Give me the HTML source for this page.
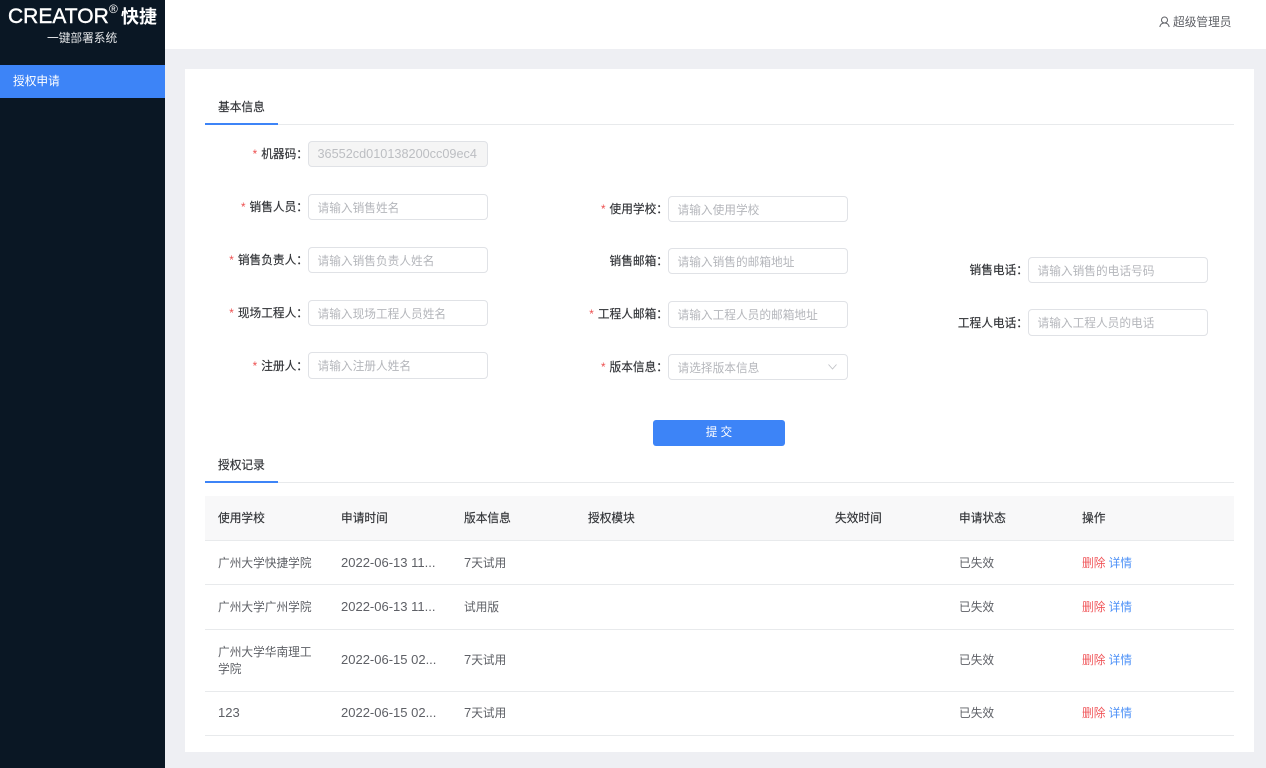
<!DOCTYPE html>
<html lang="zh"><head><meta charset="utf-8"><title>授权申请</title>
<style>
*{box-sizing:border-box;margin:0;padding:0}
html,body{width:1266px;height:768px;overflow:hidden;background:#eeeff3}
body{position:relative;font-family:"Liberation Sans","Noto Sans CJK SC",sans-serif;font-size:11.7px;color:#5e6066}
.a{position:absolute;white-space:nowrap;line-height:16px;margin-top:1px}
.s{margin-top:0}
.u{margin-top:0}
.i{position:absolute;width:180px;height:26px;border:1px solid #e0e2e6;border-radius:4px;background:#fff;color:#b4b6bb;line-height:27px;padding-left:8.5px;white-space:nowrap}
.l{position:absolute;width:140px;text-align:right;line-height:16px;color:#303236;white-space:nowrap;margin:1px 0 0 7px;-webkit-text-stroke:.15px #303236}
.l b{font-weight:400;color:#ed4f4f;margin-right:4px;-webkit-text-stroke:0}
.line{position:absolute;background:#e8eaec;height:1px;left:205px;width:1029px}
.tab{position:absolute;left:205px;width:73px;height:2px;background:#3d84f7}
.h{color:#303236;-webkit-text-stroke:.15px #303236}
.d{font-size:13px}
.r{color:#f0565a}
.bl{color:#4a8ff7}
</style></head><body>
<div style="position:absolute;left:0;top:0;width:165px;height:768px;background:#0a1724"></div>
<div class="a s" style="left:8px;top:5px;font-size:21px;line-height:24px;color:#fff;-webkit-text-stroke:.4px #fff">CREATOR</div>
<div class="a s" style="left:109px;top:3px;font-size:12px;line-height:12px;color:#fff">®</div>
<div class="a s" style="left:121px;top:5px;font-size:18px;line-height:24px;color:#fff;font-weight:700">快捷</div>
<div class="a s" style="left:47px;top:31px;font-size:11.7px;color:#e4e6e8">一键部署系统</div>
<div style="position:absolute;left:0;top:65px;width:165px;height:33px;background:#3d84f7"></div>
<div class="a s" style="left:13px;top:74px;color:#fff">授权申请</div>

<div style="position:absolute;left:165px;top:0;width:1101px;height:49px;background:#fff"></div>
<svg style="position:absolute;left:1159px;top:16px" width="11" height="12" viewBox="0 0 11 12" fill="none" stroke="#5e6066" stroke-width="1"><circle cx="5.5" cy="4" r="3"/><path d="M.8 11c.5-2.600 2.200-4 4.700-4s4.200 1.400 4.700 4"/></svg>
<div class="a" style="left:1173px;top:14px">超级管理员</div>

<div style="position:absolute;left:185px;top:69px;width:1069px;height:683px;background:#fff"></div>

<div class="a h" style="left:218px;top:99px">基本信息</div>
<div class="line" style="top:124px"></div><div class="tab" style="top:123px"></div>

<div class="l" style="left:161px;top:146px"><b>*</b>机器码：</div>
<div class="i" style="left:308px;top:141px;background:#f5f5f5;color:#bcbec2;font-size:12.7px;line-height:25px">36552cd010138200cc09ec4</div>
<div class="l" style="left:161px;top:199px"><b>*</b>销售人员：</div>
<div class="i" style="left:308px;top:194px">请输入销售姓名</div>
<div class="l" style="left:161px;top:252px"><b>*</b>销售负责人：</div>
<div class="i" style="left:308px;top:247px">请输入销售负责人姓名</div>
<div class="l" style="left:161px;top:305px"><b>*</b>现场工程人：</div>
<div class="i" style="left:308px;top:300px">请输入现场工程人员姓名</div>
<div class="l" style="left:161px;top:358px"><b>*</b>注册人：</div>
<div class="i" style="left:308px;top:352px;height:27px">请输入注册人姓名</div>

<div class="l" style="left:521px;top:201px"><b>*</b>使用学校：</div>
<div class="i" style="left:668px;top:196px">请输入使用学校</div>
<div class="l" style="left:521px;top:253px">销售邮箱：</div>
<div class="i" style="left:668px;top:248px">请输入销售的邮箱地址</div>
<div class="l" style="left:521px;top:306px"><b>*</b>工程人邮箱：</div>
<div class="i" style="left:668px;top:301px;height:27px">请输入工程人员的邮箱地址</div>
<div class="l" style="left:521px;top:359px"><b>*</b>版本信息：</div>
<div class="i" style="left:668px;top:354px">请选择版本信息</div>
<svg style="position:absolute;left:827px;top:363px" width="11" height="8" viewBox="0 0 11 8" fill="none" stroke="#c0c2c6" stroke-width=".9"><path d="M1.500 1.500l4 4.500 4-4.500"/></svg>

<div class="l" style="left:881px;top:262px">销售电话：</div>
<div class="i" style="left:1028px;top:257px">请输入销售的电话号码</div>
<div class="l" style="left:881px;top:315px">工程人电话：</div>
<div class="i" style="left:1028px;top:309px;height:27px">请输入工程人员的电话</div>

<div style="position:absolute;left:653px;top:420px;width:132px;height:26px;background:#3d84f7;border-radius:3px;color:#fff;text-align:center;line-height:26px;letter-spacing:3px;padding-left:3px">提交</div>

<div class="a h" style="left:218px;top:457px">授权记录</div>
<div class="line" style="top:482px"></div><div class="tab" style="top:481px"></div>

<div style="position:absolute;left:205px;top:496px;width:1029px;height:44px;background:#f8f8f9"></div>
<div class="a h" style="left:218px;top:510px">使用学校</div>
<div class="a h" style="left:341px;top:510px">申请时间</div>
<div class="a h" style="left:464px;top:510px">版本信息</div>
<div class="a h" style="left:588px;top:510px">授权模块</div>
<div class="a h" style="left:835px;top:510px">失效时间</div>
<div class="a h" style="left:959px;top:510px">申请状态</div>
<div class="a h" style="left:1082px;top:510px">操作</div>
<div class="line" style="top:540px"></div>

<div class="a" style="left:218px;top:555px">广州大学快捷学院</div>
<div class="a d u" style="left:341px;top:555px">2022-06-13 11...</div>
<div class="a u" style="left:464px;top:555px"><span class="d">7</span>天试用</div>
<div class="a" style="left:959px;top:555px">已失效</div>
<div class="a" style="left:1082px;top:555px"><span class="r">删除</span> <span class="bl">详情</span></div>
<div class="line" style="top:584px"></div>

<div class="a" style="left:218px;top:599px">广州大学广州学院</div>
<div class="a d u" style="left:341px;top:599px">2022-06-13 11...</div>
<div class="a" style="left:464px;top:599px">试用版</div>
<div class="a" style="left:959px;top:599px">已失效</div>
<div class="a" style="left:1082px;top:599px"><span class="r">删除</span> <span class="bl">详情</span></div>
<div class="line" style="top:629px"></div>

<div class="a" style="left:218px;top:644px">广州大学华南理工</div>
<div class="a" style="left:218px;top:661px">学院</div>
<div class="a d u" style="left:341px;top:652px">2022-06-15 02...</div>
<div class="a u" style="left:464px;top:652px"><span class="d">7</span>天试用</div>
<div class="a" style="left:959px;top:652px">已失效</div>
<div class="a" style="left:1082px;top:652px"><span class="r">删除</span> <span class="bl">详情</span></div>
<div class="line" style="top:691px"></div>

<div class="a d u" style="left:218px;top:705px">123</div>
<div class="a d u" style="left:341px;top:705px">2022-06-15 02...</div>
<div class="a u" style="left:464px;top:705px"><span class="d">7</span>天试用</div>
<div class="a" style="left:959px;top:705px">已失效</div>
<div class="a" style="left:1082px;top:705px"><span class="r">删除</span> <span class="bl">详情</span></div>
<div class="line" style="top:735px"></div>
</body></html>
